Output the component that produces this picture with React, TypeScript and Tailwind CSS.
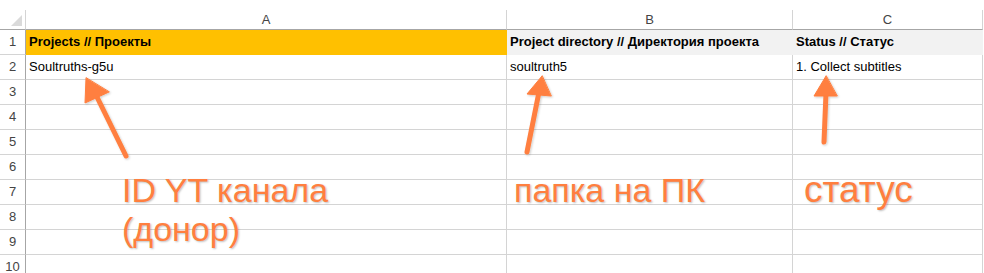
import React from "react";

const rows = [1, 2, 3, 4, 5, 6, 7, 8, 9, 10];

function Cell({
  children,
  className = "",
}: {
  children?: React.ReactNode;
  className?: string;
}) {
  return (
    <div
      className={
        "h-[25px] border-r border-b border-[#d4d4d4] pl-[3px] flex items-end pb-[4px] text-[13px] leading-[16px] text-black whitespace-nowrap overflow-visible " +
        className
      }
    >
      {children}
    </div>
  );
}

export default function App() {
  return (
    <div className="relative w-[984px] h-[273px] overflow-hidden bg-white font-['Liberation_Sans',Arial,sans-serif]">
      <div className="pt-[10px]">
        <div className="grid grid-cols-[26px_481px_286px_190px]">
          {/* column header row */}
          <div className="relative h-[20px] border-r border-b border-r-[#d4d4d4] border-b-[#a6a6a6]">
            <div className="absolute right-[3px] bottom-[3px] w-0 h-0 border-l-[11px] border-l-transparent border-b-[11px] border-b-[#dadada]" />
          </div>
          <div className="h-[20px] border-r border-b border-r-[#d4d4d4] border-b-[#a6a6a6] flex items-center justify-center text-[13px] text-[#444]">
            A
          </div>
          <div className="h-[20px] border-r border-b border-r-[#d4d4d4] border-b-[#a6a6a6] flex items-center justify-center text-[13px] text-[#444]">
            B
          </div>
          <div className="h-[20px] border-r border-b border-r-[#d4d4d4] border-b-[#a6a6a6] flex items-center justify-center text-[13px] text-[#444]">
            C
          </div>

          {rows.map((r) => (
            <React.Fragment key={r}>
              <div className="h-[25px] border-r border-b border-r-[#a6a6a6] border-b-[#d4d4d4] flex items-center justify-center text-[13px] text-[#444]">
                {r}
              </div>
              {r === 1 ? (
                <>
                  <Cell className="bg-[#ffc000] border-[#ffc000] font-bold">
                    Projects // Проекты
                  </Cell>
                  <Cell className="bg-[#f2f2f2] border-[#f2f2f2] font-bold">
                    Project directory // Директория проекта
                  </Cell>
                  <Cell className="bg-[#f2f2f2] border-[#f2f2f2] font-bold">
                    Status // Статус
                  </Cell>
                </>
              ) : r === 2 ? (
                <>
                  <Cell>Soultruths-g5u</Cell>
                  <Cell>soultruth5</Cell>
                  <Cell>1. Collect subtitles</Cell>
                </>
              ) : (
                <>
                  <Cell />
                  <Cell />
                  <Cell />
                </>
              )}
            </React.Fragment>
          ))}
        </div>
      </div>

      {/* annotation arrows */}
      <svg
        className="absolute left-0 top-0"
        width="984"
        height="273"
        viewBox="0 0 984 273"
      >
        <defs>
          <filter id="sh" x="-20%" y="-20%" width="140%" height="140%">
            <feDropShadow dx="1" dy="1" stdDeviation="1" floodColor="#000" floodOpacity="0.2" />
          </filter>
        </defs>
        <g fill="#ff7f3f" stroke="#ff7f3f" strokeLinecap="round" strokeLinejoin="round" filter="url(#sh)">
          <line x1="126" y1="156" x2="96" y2="95" strokeWidth="5" />
          <polygon points="86,78 85,103 109,92" strokeWidth="1" />
          <line x1="527" y1="152" x2="539" y2="92" strokeWidth="5" />
          <polygon points="542,76 527,94 551,96" strokeWidth="1" />
          <line x1="824" y1="142" x2="826" y2="93" strokeWidth="5" />
          <polygon points="826,76 814,96 837,96" strokeWidth="1" />
        </g>
      </svg>

      {/* annotation texts */}
      <div className="absolute left-[122px] top-[171px] text-[34px] leading-[39px] text-[#ff7f3f] [text-shadow:1px_1px_2px_rgba(0,0,0,0.25)] whitespace-nowrap">
        <div>ID YT канала</div>
        <div>(донор)</div>
      </div>
      <div className="absolute left-[514px] top-[171px] text-[34px] leading-[39px] text-[#ff7f3f] [text-shadow:1px_1px_2px_rgba(0,0,0,0.25)] whitespace-nowrap">
        папка на ПК
      </div>
      <div className="absolute left-[804px] top-[170px] text-[37px] leading-[39px] text-[#ff7f3f] [text-shadow:1px_1px_2px_rgba(0,0,0,0.25)] whitespace-nowrap">
        статус
      </div>
    </div>
  );
}
